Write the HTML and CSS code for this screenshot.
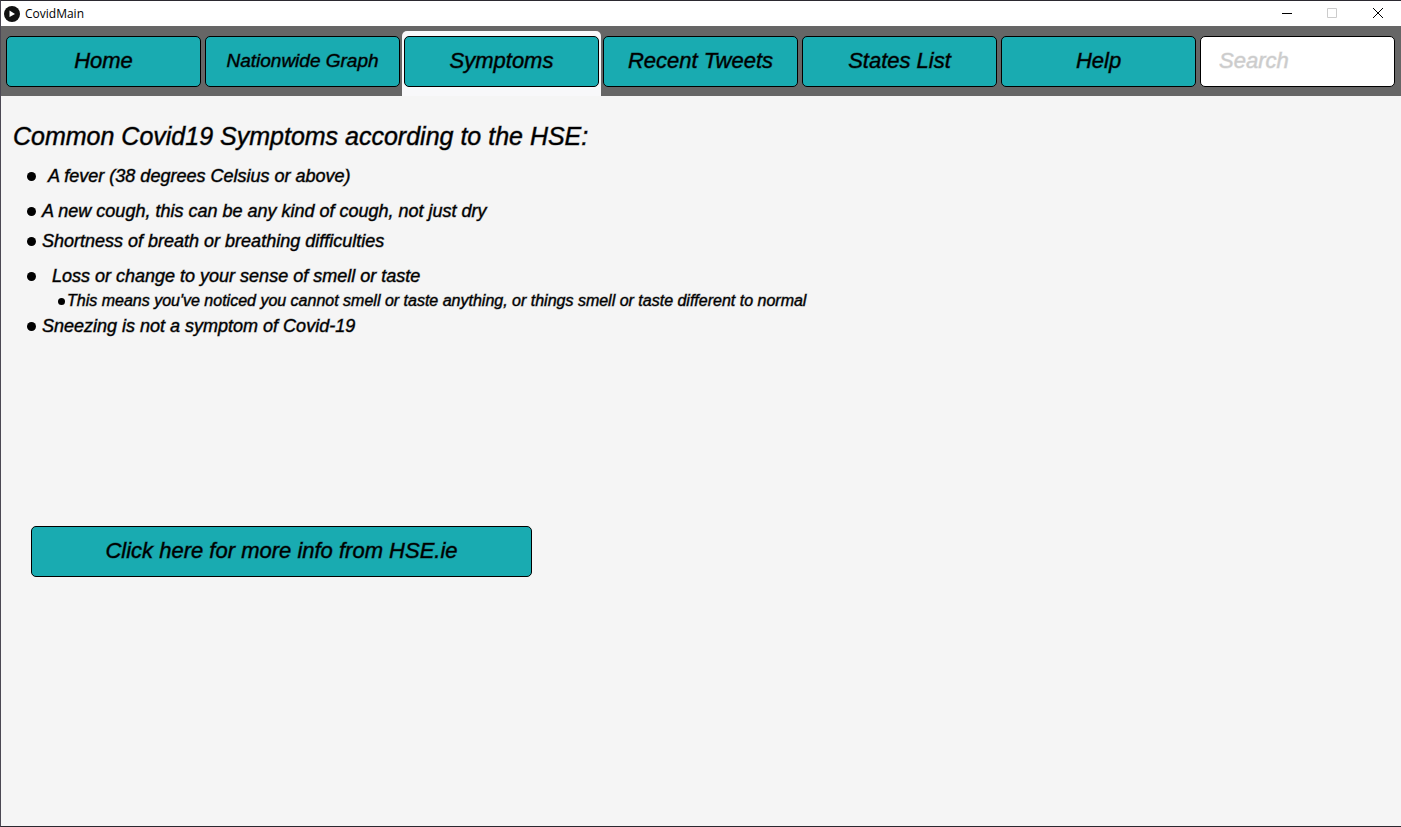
FILE: index.html
```html
<!DOCTYPE html>
<html lang="en">
<head>
<meta charset="utf-8">
<title>CovidMain</title>
<link rel="stylesheet" href="styles.css">
</head>
<body>
<div class="window">
  <header class="titlebar">
    <svg class="app-icon" viewBox="0 0 16 16" aria-hidden="true"><circle cx="8" cy="8" r="8" fill="#111"/><path d="M5.5 4.5 11 8 5.5 11z" fill="#fff"/></svg>
    <span class="app-name">CovidMain</span>
    <div class="controls">
      <button class="control" type="button" aria-label="Minimize"><svg viewBox="0 0 10 10" aria-hidden="true"><path d="M1 5.5h10"/></svg></button>
      <button class="control" type="button" aria-label="Maximize" disabled><svg viewBox="0 0 10 10" aria-hidden="true"><path d="M.5.5h9v9h-9z"/></svg></button>
      <button class="control" type="button" aria-label="Close"><svg viewBox="0 0 10 10" aria-hidden="true"><path d="M0 0 10 10M10 0 0 10"/></svg></button>
    </div>
  </header>
  <nav class="tabs">
    <div class="tab"><button class="button" type="button">Home</button></div>
    <div class="tab"><button class="button button-small" type="button">Nationwide Graph</button></div>
    <div class="tab tab-active"><button class="button" type="button" aria-current="page">Symptoms</button></div>
    <div class="tab"><button class="button" type="button">Recent Tweets</button></div>
    <div class="tab"><button class="button" type="button">States List</button></div>
    <div class="tab"><button class="button" type="button">Help</button></div>
    <div class="tab"><input class="search" type="text" placeholder="Search" aria-label="Search"></div>
  </nav>
  <main class="content">
    <h1 class="heading">Common Covid19 Symptoms according to the HSE:</h1>
    <ul class="symptoms">
      <li class="symptom spaced indented">A fever (38 degrees Celsius or above)</li>
      <li class="symptom">A new cough, this can be any kind of cough, not just dry</li>
      <li class="symptom spaced">Shortness of breath or breathing difficulties</li>
      <li class="symptom indented-more">Loss or change to your sense of smell or taste
        <ul class="details">
          <li class="detail">This means you've noticed you cannot smell or taste anything, or things smell or taste different to normal</li>
        </ul>
      </li>
      <li class="symptom">Sneezing is not a symptom of Covid-19</li>
    </ul>
    <button class="button more-info" type="button">Click here for more info from HSE.ie</button>
  </main>
</div>
</body>
</html>
```
FILE: styles.css
```css
* { box-sizing: border-box; }

body {
  margin: 0;
  background: #f5f5f5;
  color: #000;
  font-family: "Liberation Sans", Arial, sans-serif;
}

.window {
  display: flex;
  flex-direction: column;
  min-height: 100vh;
  border: 1px solid #2b2930;
  border-left-color: #4b4853;
  border-right: 0;
}

.titlebar {
  display: flex;
  align-items: center;
  height: 25px;
  padding-left: 3px;
  background: #fff;
  color: #000;
  font: 12px/16px "Open Sans", "Segoe UI", sans-serif;
}

.app-icon {
  width: 16px;
  height: 16px;
  margin-right: 5px;
}

.controls {
  display: flex;
  height: 100%;
  margin-left: auto;
}

.control {
  display: flex;
  align-items: center;
  justify-content: center;
  width: 46px;
  padding: 0 0 1px;
  border: 0;
  background: none;
}

.control svg {
  width: 10px;
  height: 10px;
  overflow: visible;
  fill: none;
  stroke: #000;
}

.control:disabled svg { stroke: #ccc; }

.tabs {
  display: flex;
  padding: 5px 4px 0 3px;
  background: #666;
}

.tab {
  flex: 1;
  min-width: 0;
  padding: 5px 2px 9px;
}

.tab-active {
  border-radius: 5px 5px 0 0;
  background: #f8f8fa;
}

.button,
.search {
  display: block;
  width: 100%;
  height: 51px;
  border: 1px solid #000;
  border-radius: 5px;
  font: italic 22px/26px "Liberation Sans", Arial, sans-serif;
}

.button {
  padding: 0 0 2px;
  background: #19abb1;
  color: #000;
}

.button,
.heading,
.symptom {
  -webkit-text-stroke: 1px rgba(0, 0, 0, 0.45);
}

.button-small { font-size: 19px; }

.search {
  padding: 0 18px 2px;
  background: #fff;
}

.search::placeholder {
  color: #ccc;
  opacity: 1;
  -webkit-text-stroke: 1px rgba(204, 204, 204, 0.5);
}

.content { padding: 24px 12px; }

.heading {
  margin: 0 0 14px;
  font-size: 25px;
  line-height: 32px;
  font-weight: 400;
  font-style: italic;
}

.symptoms,
.details {
  margin: 0;
  padding: 0;
  list-style: none;
}

.symptoms {
  display: flex;
  flex-direction: column;
  padding-left: 14px;
}

.symptom {
  margin-bottom: 10px;
  font-size: 18px;
  line-height: 20px;
  font-style: italic;
}

.symptom.spaced { margin-bottom: 15px; }

.symptom::before,
.detail::before {
  content: "";
  display: inline-block;
  width: 9px;
  height: 9px;
  margin-right: 6px;
  border-radius: 50%;
  background: #000;
  vertical-align: 1px;
}

.indented::before { margin-right: 12px; }

.indented-more::before { margin-right: 16px; }

.symptom:nth-child(4) { margin-bottom: 5px; }

.details {
  margin-top: 5px;
  padding-left: 31px;
}

.detail { font-size: 16px; }

.detail::before {
  width: 7px;
  height: 7px;
  margin-right: 2px;
}

.more-info {
  width: 501px;
  max-width: 100%;
  margin: 180px 0 0 18px;
}
```
